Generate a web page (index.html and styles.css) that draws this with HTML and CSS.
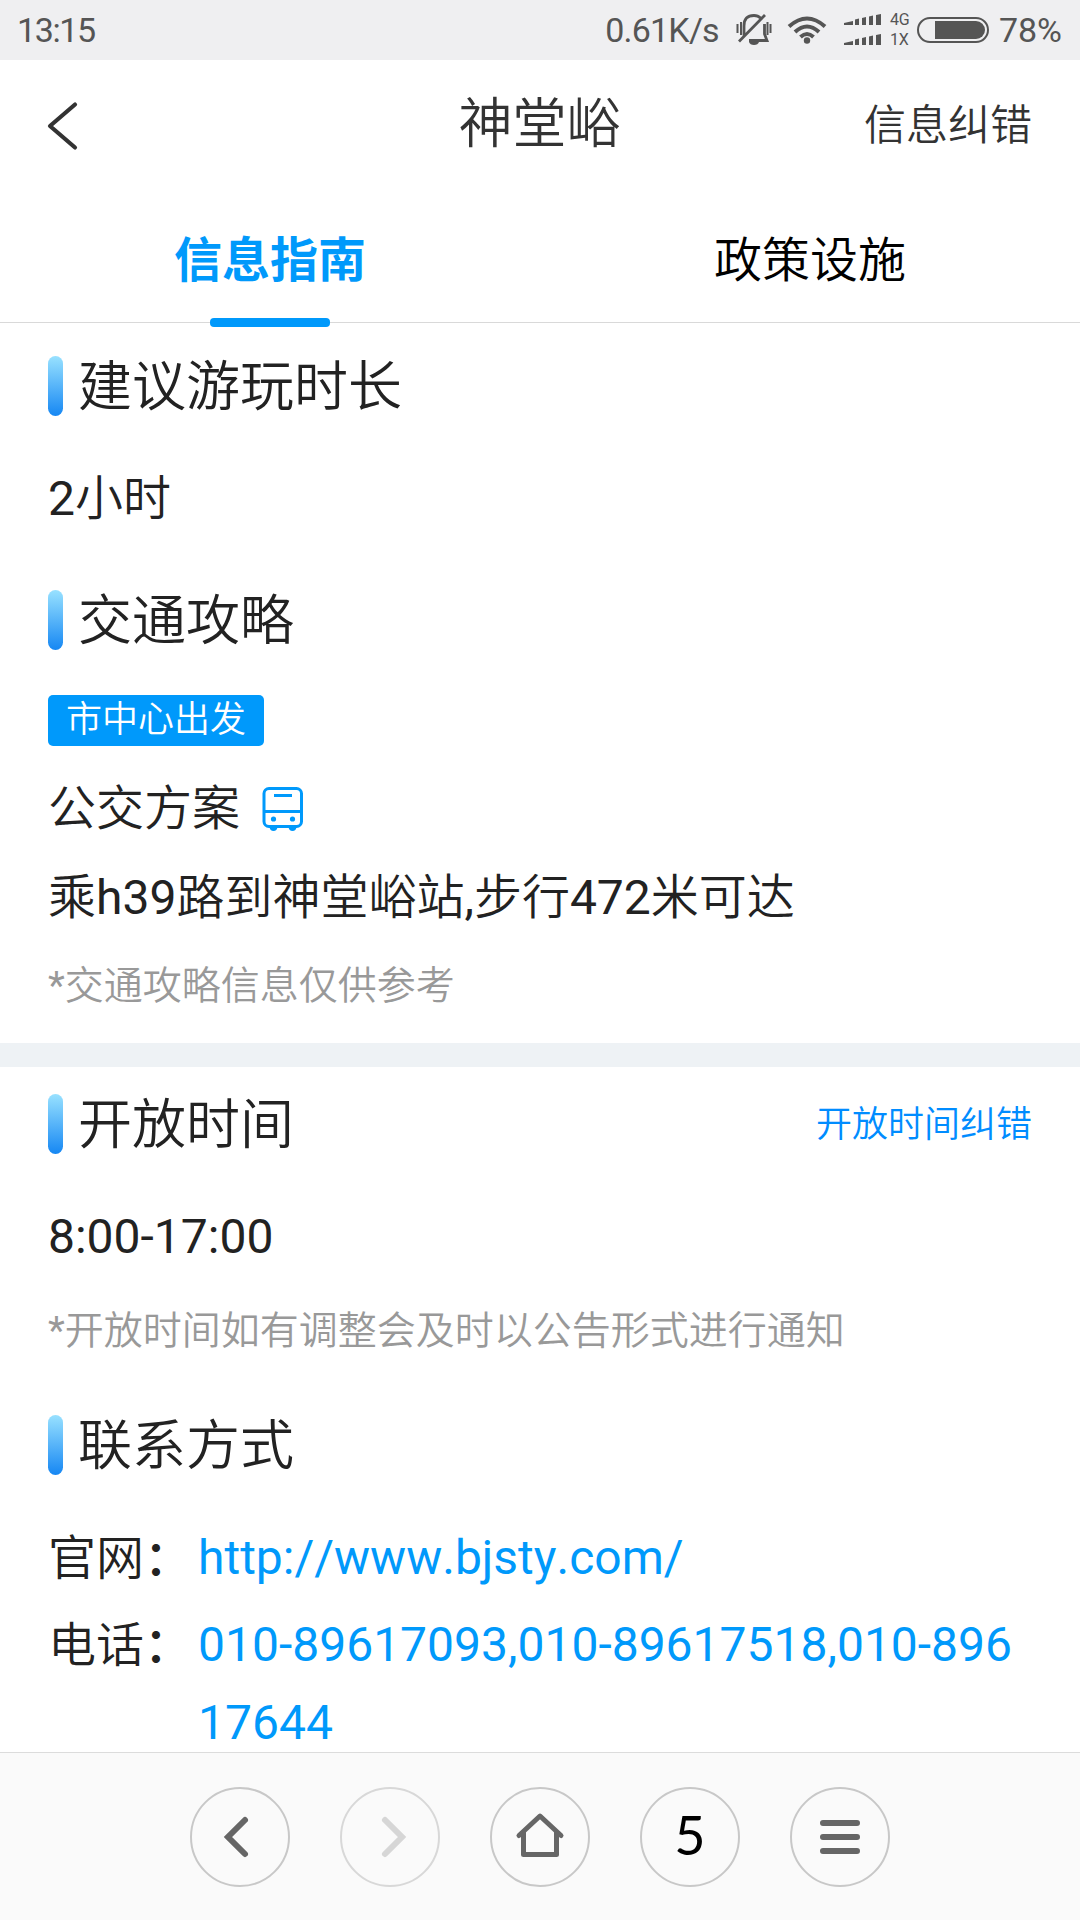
FILE: index.html
```html
<!DOCTYPE html>
<html lang="zh-CN">
<head>
  <meta charset="UTF-8">
  <meta name="viewport" content="width=device-width, initial-scale=1.0">
  <title>神堂峪</title>
  <link rel="stylesheet" href="styles.css">
</head>
<body>
  <div class="status-bar">
    <span class="time">13:15</span>
    <span class="speed">0.61K/s</span>
    <svg class="bell" width="36" height="34" viewBox="0 0 36 34" fill="none" stroke="#555" stroke-width="2.8">
      <path d="M8 23V13Q8 2.500 18 2.500Q22 2.500 24.500 5M28.500 11V21L31 27.500H13M3 28.500L29 2"/>
      <path d="M1.500 11v9M5 9v13M31.500 9v13M34.500 11v9" stroke-width="2"/>
      <path d="M13 29h10q-1 3-5 3t-5-3z" fill="#555" stroke="none"/>
    </svg>
    <svg class="wifi" width="40" height="30" viewBox="0 0 40 30" fill="none" stroke="#555" stroke-width="4">
      <path d="M2 11.5Q20-4.5 38 11.5M8 17Q20 6 32 17M13.5 22Q20 16 26.5 22"/>
      <circle cx="20" cy="25.5" r="3.2" fill="#555" stroke="none"/>
    </svg>
    <svg class="signal" width="38" height="34" viewBox="0 0 38 34" fill="#555">
      <path d="M0 12V10L9 8V12zM11 12V6.5L15 5.5V12zM18 12V5L22 4V12zM25 12V3.5L29 2.5V12zM32 12V2L37 1V12z"/>
      <path d="M0 32V30L9 28V32zM11 32V26.5L15 25.5V32zM18 32V25L22 24V32zM25 32V23.5L29 22.5V32zM32 32V22L37 21V32z"/>
    </svg>
    <div class="network"><span>4G</span><span>1X</span></div>
    <div class="battery"><div class="level"></div></div>
    <span class="percent">78%</span>
  </div>

  <header class="header">
    <svg width="34" height="52" viewBox="0 0 34 52" fill="none" stroke="#333" stroke-width="4.2" stroke-linecap="round" stroke-linejoin="round">
      <path d="M28 4.5L3 26L28 47.5"/>
    </svg>
    <h1>神堂峪</h1>
    <a class="report">信息纠错</a>
  </header>

  <nav class="tabs">
    <a class="tab active">信息指南</a>
    <a class="tab">政策设施</a>
  </nav>

  <main class="content">
    <section class="card guide">
      <div class="section-head"><h2>建议游玩时长</h2></div>
      <p class="text"><span class="num">2</span>小时</p>
      <div class="section-head traffic"><h2>交通攻略</h2></div>
      <span class="tag">市中心出发</span>
      <p class="text plan">公交方案
        <svg width="42" height="46" viewBox="0 0 42 46" fill="none" stroke="#0099fb" stroke-width="3">
          <rect x="2" y="2.5" width="37.5" height="38" rx="5"/>
          <path d="M2.5 25.5h37M12 9.5h18"/>
          <g fill="#0099fb" stroke="none">
            <circle cx="11.5" cy="33" r="2.6"/>
            <circle cx="30.5" cy="33" r="2.6"/>
            <path d="M7.5 41h8q-.5 4-4 4t-4-4zM26.500 41h8q-.5 4-4 4t-4-4z"/>
          </g>
        </svg>
      </p>
      <p class="text route">乘<span class="num">h39</span>路到神堂峪站<span class="num">,</span>步行<span class="num">472</span>米可达</p>
      <p class="note"><span class="num">*</span>交通攻略信息仅供参考</p>
    </section>

    <section class="card">
      <div class="section-head">
        <h2>开放时间</h2>
        <a class="time-report">开放时间纠错</a>
      </div>
      <p class="text"><span class="num">8:00-17:00</span></p>
      <p class="note open-note"><span class="num">*</span>开放时间如有调整会及时以公告形式进行通知</p>
      <div class="section-head contact"><h2>联系方式</h2></div>
      <div class="row">
        <span class="label">官网<span class="colon">：</span></span>
        <a class="value">http://www.bjsty.com/</a>
      </div>
      <div class="row">
        <span class="label">电话<span class="colon">：</span></span>
        <a class="value">010-89617093,010-89617518,010-89617644</a>
      </div>
    </section>
  </main>

  <footer class="toolbar">
    <a class="btn">
      <svg width="96" height="96" viewBox="1 1 96 96" fill="none" stroke="#666" stroke-width="6" stroke-linecap="round"><path d="M54 32L37 49L54 66"/></svg>
    </a>
    <a class="btn disabled">
      <svg width="96" height="96" viewBox="1 1 96 96" fill="none" stroke="#d6d6d6" stroke-width="6" stroke-linecap="round"><path d="M44 32L61 49L44 66"/></svg>
    </a>
    <a class="btn">
      <svg width="96" height="96" viewBox="1 1 96 96" fill="none" stroke="#666" stroke-width="5" stroke-linecap="round" stroke-linejoin="round"><path d="M28 47.500L49 28L70 47.500M32.500 45V66.500H65.500V45"/></svg>
    </a>
    <a class="btn pages">5</a>
    <a class="btn">
      <svg width="96" height="96" viewBox="1 1 96 96" stroke="#666" stroke-width="6" stroke-linecap="round"><path d="M32 35h34M32 49h34M32 63h34"/></svg>
    </a>
  </footer>
</body>
</html>
```

FILE: styles.css
```css
* {
  margin: 0;
  padding: 0;
  box-sizing: border-box;
}

body {
  font-family: Roboto, "Noto Sans CJK SC", sans-serif;
  font-weight: 350;
  font-kerning: none;
  background-color: #fff;
  color: #222;
  display: flex;
  flex-direction: column;
  height: 1920px;
  overflow: hidden;
}

svg {
  display: block;
  flex-shrink: 0;
}

h1,
h2 {
  font-size: 54px;
  font-weight: 350;
  line-height: 60px;
}

h1 {
  padding-bottom: 2px;
}

.num {
  font-weight: 400;
}

/* status bar */
.status-bar {
  display: flex;
  align-items: center;
  height: 60px;
  padding: 0 18px 0 17px;
  background-color: #efeff1;
  color: #555;
  font-size: 34px;
  font-weight: 400;
  flex-shrink: 0;
}

.time {
  margin-right: auto;
  letter-spacing: -1.4px;
}

.speed {
  margin-right: 17px;
  letter-spacing: -0.8px;
}

.bell {
  margin-right: 15px;
}

.wifi {
  margin-right: 17px;
}

.signal {
  margin-right: 8px;
}

.network {
  display: flex;
  flex-direction: column;
  width: 27px;
  font-size: 16px;
  line-height: 20px;
}

.battery {
  width: 72px;
  height: 26px;
  padding: 2px;
  border: 2px solid #555;
  border-radius: 13px;
  margin-right: 10px;
}

.level {
  width: 50px;
  height: 18px;
  margin-left: auto;
  border-radius: 0 9px 9px 0;
  background-color: #555;
}

/* title and tabs */
.header {
  display: flex;
  align-items: center;
  justify-content: space-between;
  height: 130px;
  padding: 2px 48px 0 47px;
  color: #333;
  flex-shrink: 0;
}

.header svg {
  margin-right: 134px;
}

.report {
  font-size: 42px;
  line-height: 60px;
  padding-bottom: 1px;
}

.tabs {
  display: flex;
  height: 133px;
  border-bottom: 1px solid #d9d9d9;
  flex-shrink: 0;
}

.tab {
  position: relative;
  flex: 1;
  text-align: center;
  color: #000;
  font-size: 48px;
  line-height: 142px;
}

.tab.active {
  color: #0099fb;
  font-weight: bold;
}

.tab.active::after {
  content: "";
  position: absolute;
  left: 210px;
  bottom: -5px;
  width: 120px;
  height: 9px;
  border-radius: 4px;
  background-color: #0099fb;
}

/* content */
.content {
  flex: 1;
  overflow: hidden;
}

.card {
  padding: 27px 48px 0;
}

.guide {
  height: 744px;
  padding-top: 33px;
  border-bottom: 24px solid #eef2f5;
}

.section-head {
  display: flex;
  align-items: center;
  height: 60px;
  margin-bottom: 44px;
}

.section-head::before {
  content: "";
  width: 15px;
  height: 60px;
  margin-right: 15px;
  border-radius: 8px;
  background: linear-gradient(#98e1ff, #1687f3);
}

.section-head h2 {
  line-height: 56px;
  padding-top: 4px;
}

.section-head.traffic {
  margin-top: 52px;
  margin-bottom: 45px;
}

.text {
  font-size: 48px;
  line-height: 78px;
}

.tag {
  display: block;
  width: 216px;
  height: 51px;
  border-radius: 5px;
  background-color: #0099fb;
  color: #fff;
  font-size: 36px;
  line-height: 50px;
  text-align: center;
}

.plan {
  display: flex;
  align-items: center;
  margin-top: 24px;
}

.plan svg {
  margin-left: 22px;
}

.route {
  margin-top: 11px;
}

.note {
  margin-top: 19px;
  color: #999;
  font-size: 39px;
  line-height: 60px;
}

.open-note {
  margin-top: 25px;
}

.time-report {
  margin-left: auto;
  padding-top: 2px;
  color: #008cff;
  font-size: 36px;
  line-height: 60px;
}

.section-head.contact {
  margin-top: 54px;
}

.row {
  display: flex;
  margin-bottom: 9px;
  font-size: 48px;
  line-height: 78px;
}

.label {
  width: 150px;
  padding-top: 1px;
  margin-bottom: -1px;
  flex-shrink: 0;
}

.colon {
  font-weight: 500;
}

.value {
  color: #0099fb;
  font-weight: 400;
  word-break: break-all;
}

/* browser toolbar */
.toolbar {
  display: flex;
  justify-content: center;
  gap: 50px;
  height: 168px;
  padding-top: 34px;
  border-top: 1px solid #dcdcdc;
  background-color: #fafafa;
  flex-shrink: 0;
}

.btn {
  width: 100px;
  height: 100px;
  border: 2px solid #c8c8c8;
  border-radius: 50%;
}

.btn.disabled {
  border-color: #d8d8d8;
}

.pages {
  color: #000;
  font-family: Lato, Roboto, sans-serif;
  font-size: 54px;
  font-weight: 400;
  line-height: 92px;
  text-align: center;
}
```
